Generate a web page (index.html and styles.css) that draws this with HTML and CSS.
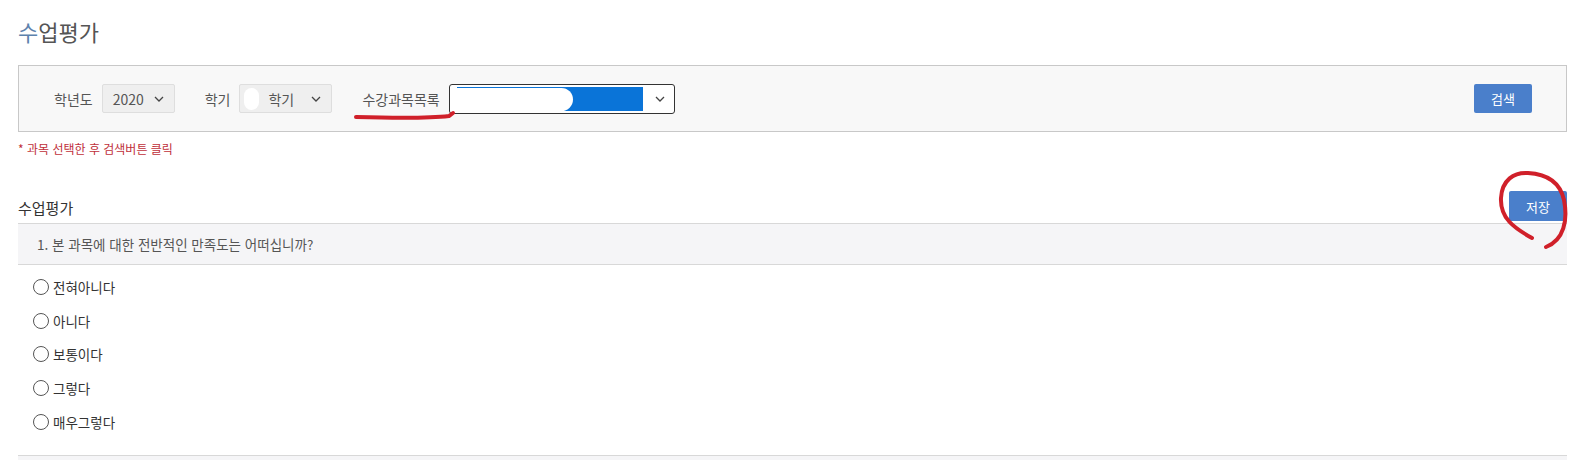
FILE: index.html
```html
<!DOCTYPE html>
<html lang="ko">
<head>
<meta charset="utf-8">
<link rel="stylesheet" href="styles.css">
</head>
<body>
<div class="page">
  <h1 class="page-title"><span class="accent">수</span>업평가</h1>

  <div class="filter">
    <div class="field">
      <span class="label">학년도</span>
      <div class="select sel-year"><span>2020</span><svg class="chev" width="10" height="6" viewBox="0 0 10 6"><polyline points="1,1 5,5 9,1" fill="none" stroke="#444" stroke-width="1.3"/></svg></div>
    </div>
    <div class="field">
      <span class="label">학기</span>
      <div class="select sel-term"><span class="blob"></span><span>학기</span><svg class="chev" width="10" height="6" viewBox="0 0 10 6"><polyline points="1,1 5,5 9,1" fill="none" stroke="#444" stroke-width="1.3"/></svg></div>
    </div>
    <div class="field field-course">
      <span class="label">수강과목목록</span>
      <div class="select sel-course"><span class="hl"><span class="hl-white"></span></span><svg class="chev" width="10" height="6" viewBox="0 0 10 6"><polyline points="1,1 5,5 9,1" fill="none" stroke="#444" stroke-width="1.3"/></svg></div>
      <svg class="mark-underline" width="110" height="14" viewBox="0 0 110 14"><path d="M4 9 C 40 10, 80 10, 97 8 L 101 5" fill="none" stroke="#d0202a" stroke-width="4" stroke-linecap="round"/></svg>
    </div>
    <div class="spacer"></div>
    <button class="btn btn-search">검색</button>
  </div>

  <p class="note">* 과목 선택한 후 검색버튼 클릭</p>

  <div class="section-head">
    <h2 class="section-title">수업평가</h2>
    <div class="save-wrap">
      <button class="btn btn-save">저장</button>
      <svg class="mark-circle" width="80" height="85" viewBox="0 0 80 85"><path d="M38 70 C 20 60, 6 50, 7 30 C 8 12, 20 4, 34 5 C 52 6, 66 14, 70 32 C 74 52, 70 72, 52 79" fill="none" stroke="#d0202a" stroke-width="4" stroke-linecap="round"/></svg>
    </div>
  </div>

  <div class="question">1. 본 과목에 대한 전반적인 만족도는 어떠십니까?</div>
  <ul class="options">
    <li><span class="radio"></span>전혀아니다</li>
    <li><span class="radio"></span>아니다</li>
    <li><span class="radio"></span>보통이다</li>
    <li><span class="radio"></span>그렇다</li>
    <li><span class="radio"></span>매우그렇다</li>
  </ul>
  <div class="next-question"></div>
</div>
</body>
</html>
```

FILE: styles.css
```css
* { box-sizing: border-box; }
html, body { margin: 0; padding: 0; background: #fff; }
body {
  font-family: "Noto Sans CJK KR", "Noto Sans", sans-serif;
  color: #333;
  font-size: 13px;
}
.page { padding: 0 13px 0 18px; }

.page-title {
  margin: 0;
  padding-top: 16px;
  height: 65px;
  font-size: 22px;
  line-height: 30px;
  font-weight: 400;
  color: #555;
}
.page-title .accent { color: #5d82ad; }

.filter {
  height: 67px;
  border: 1px solid #c8c8c8;
  background: #f8f8f8;
  display: flex;
  align-items: center;
  padding: 0 34px 0 35px;
}
.field { display: flex; align-items: center; margin-right: 30px; position: relative; }
.label { font-size: 14px; color: #555; margin-right: 9px; }
.select {
  height: 29px;
  border: 1px solid #dedede;
  background: #efefef;
  border-radius: 2px;
  display: flex;
  align-items: center;
  padding: 0 10px 0 10px;
  font-size: 14px;
  color: #555;
  position: relative;
}
.select .chev { margin-left: auto; }
.sel-year { width: 73px; }
.sel-term { width: 93px; padding-left: 28px; }
.sel-term .blob {
  position: absolute; left: 4px; top: 3px; width: 15px; height: 22px;
  background: #fff; border-radius: 8px;
}
.field-course .label { margin-right: 9px; }
.sel-course {
  width: 226px; height: 30px;
  border: 1px solid #333; border-radius: 3px; background: #fff;
  padding: 0 9px 0 7px;
}
.sel-course .hl {
  display: block; width: 186px; height: 24px; background: #0a74d8; position: relative;
}
.sel-course .hl-white {
  position: absolute; left: 0; top: 1px; width: 116px; height: 23px;
  background: #fff; border-radius: 0 12px 12px 0;
}
.mark-underline { position: absolute; left: -10px; top: 24px; }

.spacer { flex: 1; }
.btn {
  border: 0;
  background: #4a7fcb;
  color: #fff;
  font-family: inherit;
  font-size: 13px;
  border-radius: 2px;
  padding: 0;
}
.btn-search { width: 58px; height: 29px; }

.note {
  margin: 0;
  padding-top: 8px;
  height: 52px;
  font-size: 12px;
  color: #c0303a;
}

.section-head {
  display: flex;
  align-items: flex-end;
  justify-content: space-between;
  height: 37px;
}
.section-title { margin: 0 0 1px 0; font-size: 15px; font-weight: 400; color: #333; line-height: 24px; }
.save-wrap { position: relative; }
.btn-save { width: 58px; height: 30px; display: block; }
.mark-circle { position: absolute; left: -15px; top: -23px; }

.question {
  height: 42px;
  border-top: 1px solid #d8d8d8;
  border-bottom: 1px solid #d8d8d8;
  background: #f5f5f7;
  display: flex;
  align-items: center;
  padding-left: 19px;
  font-size: 13.5px;
  color: #555;
  margin-top: 2px;
}

.options { list-style: none; margin: 0; padding: 5px 0 0 15px; height: 190px; }
.options li {
  display: flex;
  align-items: center;
  height: 33.8px;
  font-size: 13.5px;
  color: #333;
}
.radio {
  width: 16px; height: 16px;
  border: 1px solid #555;
  border-radius: 50%;
  margin-right: 4px;
  background: #fff;
}
.next-question {
  height: 10px;
  border-top: 1px solid #d8d8d8;
  background: #f5f5f7;
}
```
